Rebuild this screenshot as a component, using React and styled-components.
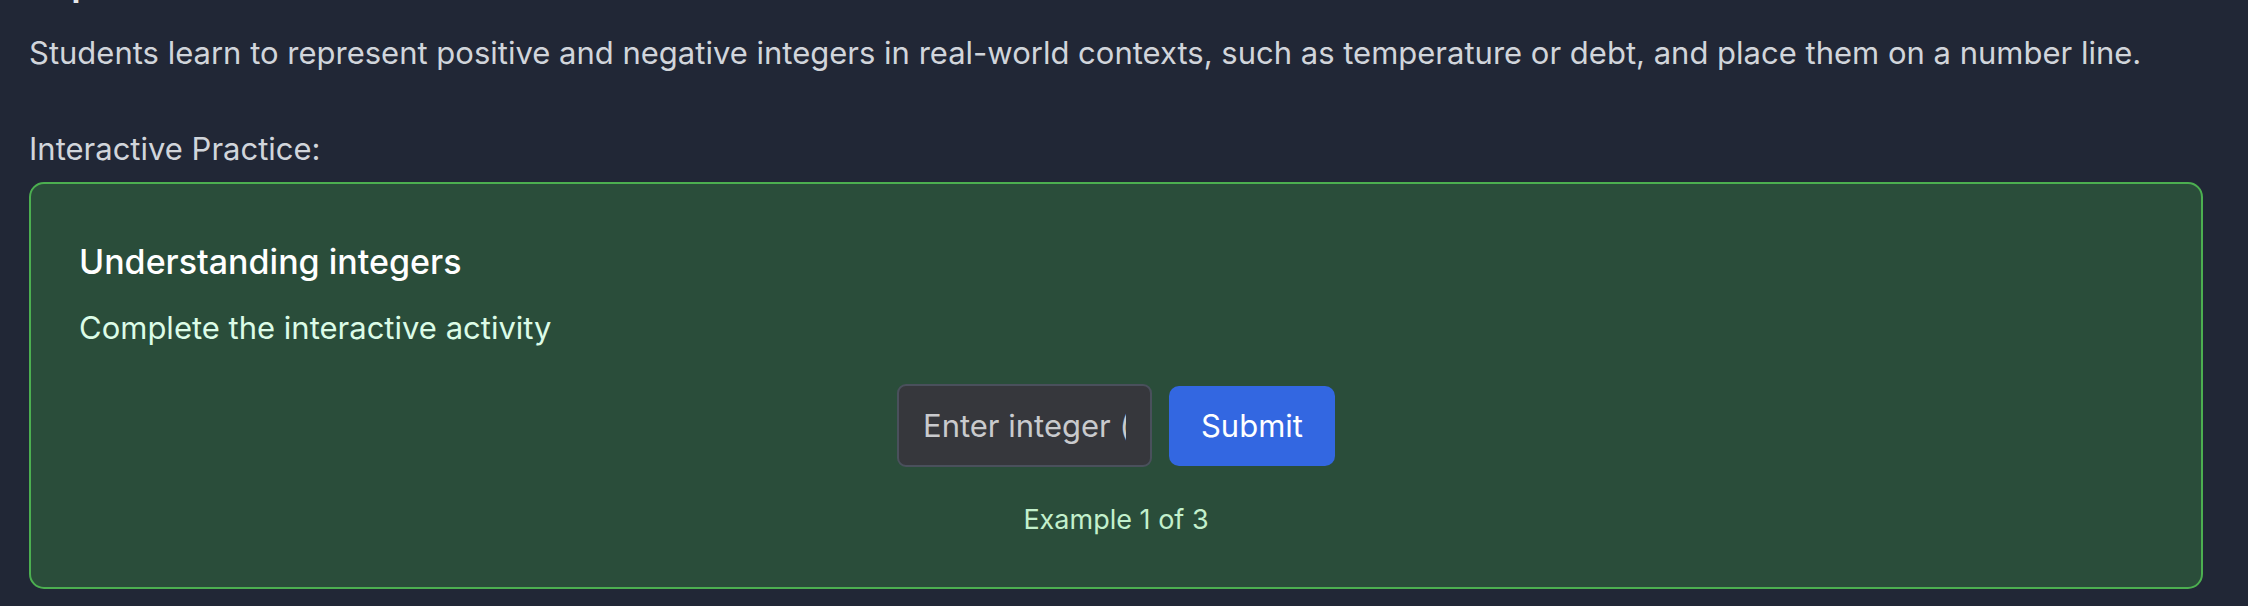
import styled, { createGlobalStyle } from "styled-components";

const GlobalStyle = createGlobalStyle`
	* {
		box-sizing: border-box;
	}
	html, body {
		margin: 0;
		padding: 0;
		background-color: #212736;
		overflow: hidden;
	}
	body {
		font-family: Inter, "Noto Sans", "Liberation Sans", sans-serif;
		color: #d1d5db;
	}
`;

function App() {
	return (
		<>
			<GlobalStyle />
			<Page>
				<Heading>Explanation</Heading>
				<Description>
					Students learn to represent positive and negative integers in real-world
					contexts, such as temperature or debt, and place them on a number line.
				</Description>
				<Label>Interactive Practice:</Label>
				<Card>
					<Title>Understanding integers</Title>
					<Subtitle>Complete the interactive activity</Subtitle>
					<AnswerRow>
						<AnswerInput type="text" placeholder="Enter integer (e.g. -5)" />
						<SubmitButton type="button">Submit</SubmitButton>
					</AnswerRow>
					<Progress>Example 1 of 3</Progress>
				</Card>
			</Page>
		</>
	);
}

export default App;

const Page = styled.main`
	width: 2248px;
	height: 606px;
	padding: 0 45px 0 29px;
	display: flex;
	flex-direction: column;
`;

const Heading = styled.h2`
	margin: -38px 0 0 0;
	font-size: 36px;
	font-weight: 600;
	line-height: 1.2;
	color: #e5e7eb;
`;

const Description = styled.p`
	margin: 25px 0 0 0;
	font-size: 31px;
	line-height: 46px;
	color: #d1d5db;
`;

const Label = styled.p`
	margin: 50px 0 0 0;
	font-size: 31px;
	line-height: 46px;
	color: #d1d5db;
`;

const Card = styled.section`
	margin-top: 10px;
	height: 407px;
	padding: 57px 48px 0 48px;
	border: 2px solid #4caf50;
	border-radius: 15px;
	background-color: #2a4d3a;
	display: flex;
	flex-direction: column;
`;

const Title = styled.h3`
	margin: 0;
	font-size: 34px;
	font-weight: 500;
	line-height: 41px;
	color: #ffffff;
`;

const Subtitle = styled.p`
	margin: 23px 0 0 0;
	font-size: 31px;
	line-height: 46px;
	color: #dcfce7;
`;

const AnswerRow = styled.div`
	margin-top: 33px;
	display: flex;
	justify-content: center;
	align-items: center;
	gap: 17px;
`;

const AnswerInput = styled.input`
	width: 255px;
	height: 83px;
	padding: 0 24px;
	border: 2px solid #4a505c;
	border-radius: 9px;
	background-color: #36373c;
	color: #e5e7eb;
	font-family: inherit;
	font-size: 31px;
	outline: none;

	&::placeholder {
		color: #c9cacd;
	}
`;

const SubmitButton = styled.button`
	width: 166px;
	height: 80px;
	border: none;
	border-radius: 10px;
	background-color: #3367e1;
	color: #ffffff;
	font-family: inherit;
	font-size: 31px;
	cursor: pointer;
`;

const Progress = styled.p`
	margin: 33px 0 0 0;
	text-align: center;
	font-size: 27px;
	line-height: 40px;
	color: #c3f0cc;
`;
